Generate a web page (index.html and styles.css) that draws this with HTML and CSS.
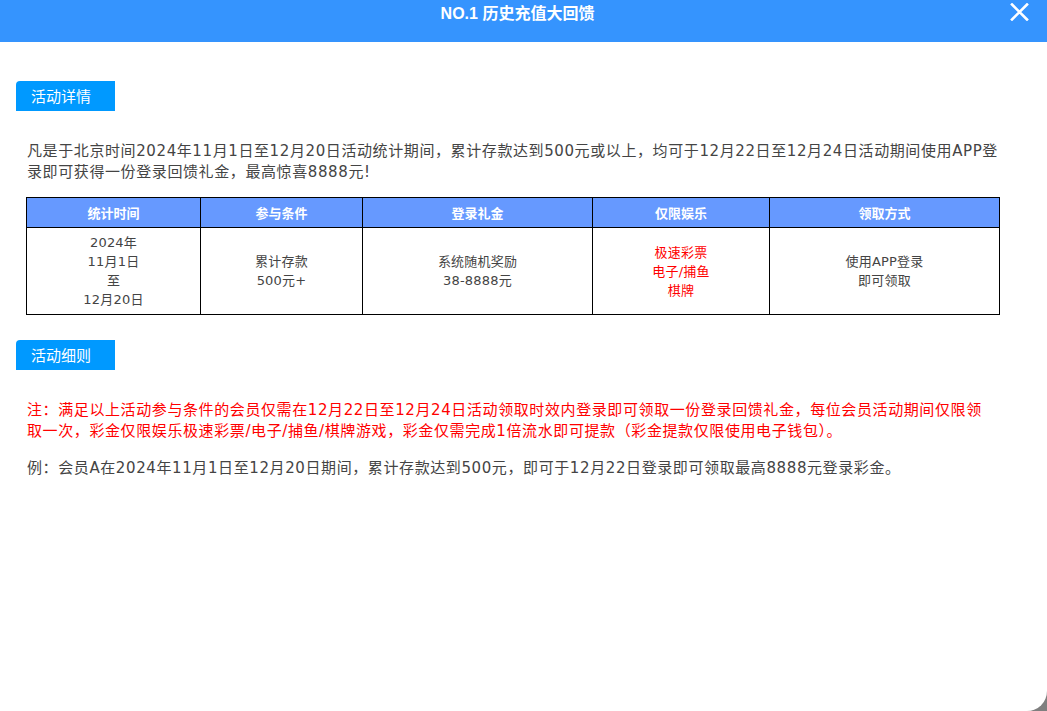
FILE: index.html
```html
<!DOCTYPE html>
<html lang="zh">
<head>
<meta charset="utf-8">
<title>NO.1 历史充值大回馈</title>
<link rel="stylesheet" href="styles.css">
</head>
<body>
<div class="modal">
  <header class="modal-header">
    <h1 class="modal-title">NO.1 历史充值大回馈</h1>
    <button class="close-btn" aria-label="关闭">
      <svg width="19" height="18" viewBox="0 0 19 18"><path d="M2 1.5 L17 16.5 M17 1.5 L2 16.5" stroke="#fff" stroke-width="2.6" stroke-linecap="square" fill="none"/></svg>
    </button>
  </header>
  <main class="modal-body">
    <div class="tag">活动详情</div>
    <p class="desc">凡是于北京时间2024年11月1日至12月20日活动统计期间，累计存款达到500元或以上，均可于12月22日至12月24日活动期间使用APP登录即可获得一份登录回馈礼金，最高惊喜8888元!</p>
    <table class="rules">
      <colgroup>
        <col style="width:174px"><col style="width:162px"><col style="width:230px"><col style="width:177px"><col>
      </colgroup>
      <thead>
        <tr><th>统计时间</th><th>参与条件</th><th>登录礼金</th><th>仅限娱乐</th><th>领取方式</th></tr>
      </thead>
      <tbody>
        <tr>
          <td>2024年<br>11月1日<br>至<br>12月20日</td>
          <td>累计存款<br>500元+</td>
          <td>系统随机奖励<br>38-8888元</td>
          <td class="red">极速彩票<br>电子/捕鱼<br>棋牌</td>
          <td>使用APP登录<br>即可领取</td>
        </tr>
      </tbody>
    </table>
    <div class="tag tag-second">活动细则</div>
    <p class="note">注：满足以上活动参与条件的会员仅需在12月22日至12月24日活动领取时效内登录即可领取一份登录回馈礼金，每位会员活动期间仅限领取一次，彩金仅限娱乐极速彩票/电子/捕鱼/棋牌游戏，彩金仅需完成1倍流水即可提款（彩金提款仅限使用电子钱包）。</p>
    <p class="example">例：会员A在2024年11月1日至12月20日期间，累计存款达到500元，即可于12月22日登录即可领取最高8888元登录彩金。</p>
  </main>
</div>
</body>
</html>
```
FILE: styles.css
```css
html, body {
  margin: 0;
  padding: 0;
  background: #7f7f7f;
}
body {
  font-family: "DejaVu Sans", "Noto Sans CJK SC", sans-serif;
  color: #444;
}
.modal {
  width: 1047px;
  height: 711px;
  background: #fff;
  border-bottom-right-radius: 20px;
  overflow: hidden;
  display: flex;
  flex-direction: column;
}
.modal-header {
  height: 42px;
  box-sizing: border-box;
  padding-right: 12px;
  background: #3594fe;
  display: flex;
  justify-content: center;
  align-items: flex-start;
  position: relative;
  flex-shrink: 0;
}
.modal-title {
  margin: 0;
  font-family: "Liberation Sans", "Noto Sans CJK SC", sans-serif;
  font-size: 16px;
  font-weight: bold;
  color: #fff;
  line-height: 28px;
}
.close-btn {
  position: absolute;
  right: 18px;
  top: 3px;
  width: 19px;
  height: 18px;
  padding: 0;
  border: 0;
  background: transparent;
  display: flex;
}
.modal-body {
  padding: 39px 44px 0 16px;
  display: flex;
  flex-direction: column;
  align-items: flex-start;
}
.tag {
  width: 99px;
  height: 30px;
  box-sizing: border-box;
  padding-left: 15px;
  background: #0099ff;
  color: #fff;
  font-family: "Noto Sans CJK SC", sans-serif;
  font-size: 15px;
  line-height: 30px;
  border-top-left-radius: 4px;
}
.tag-second {
  margin-top: 25px;
}
.desc, .note, .example {
  margin: 0;
  padding-left: 11px;
  font-size: 15px;
  line-height: 21px;
  letter-spacing: 0.6px;
}
.desc {
  margin-top: 30px;
  color: #444;
}
.rules {
  margin: 14px 0 0 10px;
  width: 974px;
  border-collapse: collapse;
  table-layout: fixed;
  font-size: 13px;
}
.rules th {
  height: 29px;
  background: #6699ff;
  color: #fff;
  font-family: "Noto Sans CJK SC", sans-serif;
  font-weight: bold;
  border: 1px solid #000;
  padding: 0;
}
.rules td {
  height: 86px;
  border: 1px solid #000;
  text-align: center;
  line-height: 19px;
  padding: 0;
  color: #444;
  letter-spacing: 0.2px;
}
.rules td.red {
  color: #ff0000;
}
.note {
  margin-top: 30px;
  padding-right: 12px;
  color: #ff0000;
}
.example {
  margin-top: 16px;
  color: #444;
}
```
